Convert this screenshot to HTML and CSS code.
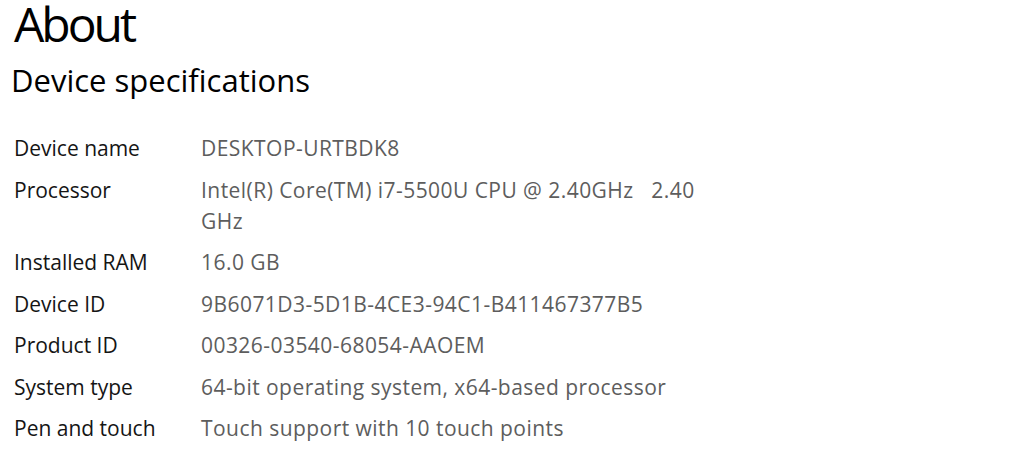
FILE: index.html
```html
<!DOCTYPE html>
<html lang="en">
<head>
  <meta charset="UTF-8" />
  <title>About</title>
  <link rel="stylesheet" href="styles.css">
</head>
<body>
  <h1 class="page-title">About</h1>
  <h2 class="section-title">Device specifications</h2>

  <!-- Especificaciones -->
  <div class="specs">
    <div class="spec-label">Device name</div>
    <div class="spec-value">DESKTOP-URTBDK8</div>

    <div class="spec-label">Processor</div>
    <div class="spec-value">Intel(R) Core(TM) i7-5500U CPU @ 2.40GHz&nbsp;&nbsp; 2.40 GHz</div>

    <div class="spec-label">Installed RAM</div>
    <div class="spec-value">16.0 GB</div>

    <div class="spec-label">Device ID</div>
    <div class="spec-value">9B6071D3-5D1B-4CE3-94C1-B411467377B5</div>

    <div class="spec-label">Product ID</div>
    <div class="spec-value">00326-03540-68054-AAOEM</div>

    <div class="spec-label">System type</div>
    <div class="spec-value">64-bit operating system, x64-based processor</div>

    <div class="spec-label">Pen and touch</div>
    <div class="spec-value">Touch support with 10 touch points</div>
  </div>
</body>
</html>
```

FILE: styles.css
```css
body {
  font-family: 'Open Sans', 'Noto Sans', sans-serif;
  background: #fff;
  color: #000;
  margin: 0;
  padding: 0 0 0 14px;
}

.page-title {
  font-size: 48px;
  font-weight: 400;
  line-height: 48px;
  letter-spacing: -3px;
  margin: 0;
}

.section-title {
  font-size: 31px;
  font-weight: 400;
  line-height: 40px;
  margin: 12px 0 0 -3px;
}

.specs {
  display: grid;
  grid-template-columns: 187px 520px;
  row-gap: 10.5px;
  margin-top: 33px;
  font-size: 21px;
  line-height: 31px;
}

.spec-label {
  color: #151515;
}

.spec-value {
  color: #5d5d5d;
  letter-spacing: 0.45px;
}
```
